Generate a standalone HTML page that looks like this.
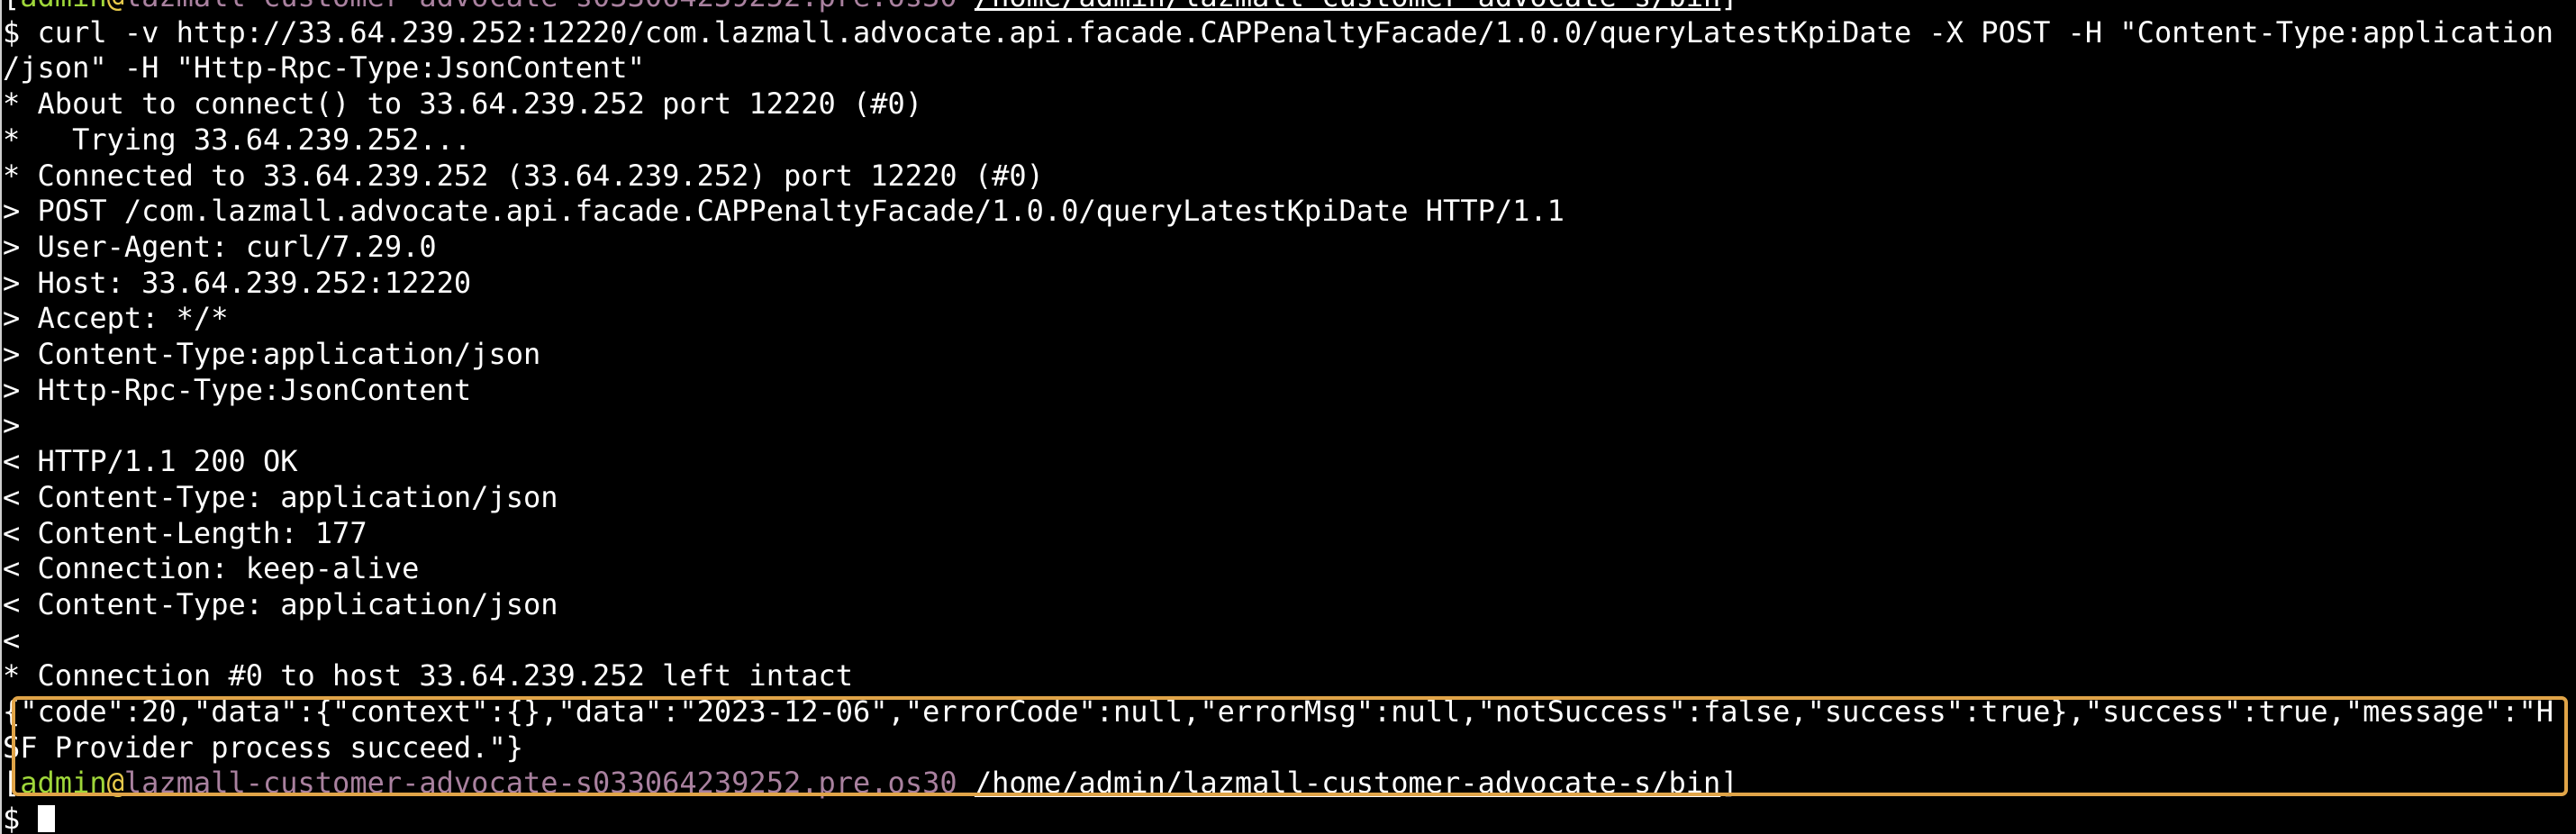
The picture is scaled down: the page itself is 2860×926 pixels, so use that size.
<!DOCTYPE html>
<html><head><meta charset="utf-8"><style>
html,body{margin:0;padding:0;background:#000;width:2860px;height:926px;overflow:hidden;}
body{position:relative;}
.lb{position:absolute;left:0;top:0;width:2px;height:926px;background:#cfcfcf;}
pre{position:absolute;left:3px;top:-23px;margin:0;font-family:"DejaVu Sans Mono","Liberation Mono",monospace;font-size:32px;line-height:39.7px;color:#fff;white-space:pre;}
.g{color:#9fd73a}.y{color:#e5c84a}.p{color:#a9819f}.u{text-decoration:underline}
.box{position:absolute;left:13px;top:773px;width:2830px;height:103px;border:4px solid #e0a448;border-radius:7px;}
.cur{display:inline-block;width:19px;height:30px;background:#fff;vertical-align:-4px;}
</style></head><body>
<div class="lb"></div>
<pre>[<span class="g">admin</span><span class="y">@</span><span class="p">lazmall-customer-advocate-s033064239252.pre.os30</span> <span class="u">/home/admin/lazmall-customer-advocate-s/bin</span>]
$ curl -v http://33.64.239.252:12220/com.lazmall.advocate.api.facade.CAPPenaltyFacade/1.0.0/queryLatestKpiDate -X POST -H "Content-Type:application
/json" -H "Http-Rpc-Type:JsonContent"
* About to connect() to 33.64.239.252 port 12220 (#0)
*   Trying 33.64.239.252...
* Connected to 33.64.239.252 (33.64.239.252) port 12220 (#0)
&gt; POST /com.lazmall.advocate.api.facade.CAPPenaltyFacade/1.0.0/queryLatestKpiDate HTTP/1.1
&gt; User-Agent: curl/7.29.0
&gt; Host: 33.64.239.252:12220
&gt; Accept: */*
&gt; Content-Type:application/json
&gt; Http-Rpc-Type:JsonContent
&gt;
&lt; HTTP/1.1 200 OK
&lt; Content-Type: application/json
&lt; Content-Length: 177
&lt; Connection: keep-alive
&lt; Content-Type: application/json
&lt;
* Connection #0 to host 33.64.239.252 left intact
{"code":20,"data":{"context":{},"data":"2023-12-06","errorCode":null,"errorMsg":null,"notSuccess":false,"success":true},"success":true,"message":"H
SF Provider process succeed."}
[<span class="g">admin</span><span class="y">@</span><span class="p">lazmall-customer-advocate-s033064239252.pre.os30</span> <span class="u">/home/admin/lazmall-customer-advocate-s/bin</span>]
$ <span class="cur"></span></pre>
<div class="box"></div>
</body></html>
